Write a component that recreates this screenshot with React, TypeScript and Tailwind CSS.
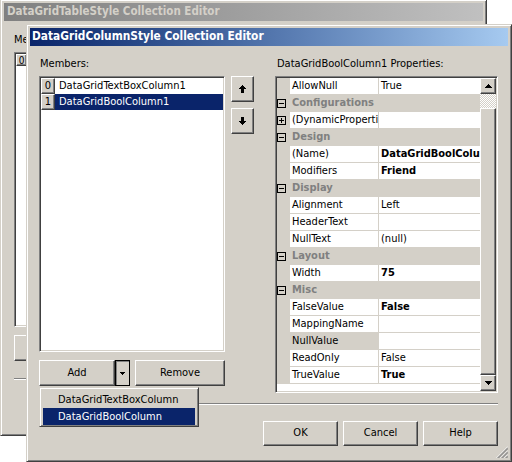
import React from "react";

const raised =
  "border border-t-white border-l-white border-r-[#404040] border-b-[#404040] shadow-[inset_-1px_-1px_0_#808080,inset_1px_1px_0_#d4d0c8]";
const sunken =
  "border border-t-[#808080] border-l-[#808080] border-r-white border-b-white shadow-[inset_1px_1px_0_#404040,inset_-1px_-1px_0_#d4d0c8]";
const frame =
  "border border-t-[#d4d0c8] border-l-[#d4d0c8] border-r-[#404040] border-b-[#404040] shadow-[inset_1px_1px_0_#ffffff,inset_-1px_-1px_0_#808080]";

type Prop = {
  cat?: string;
  name?: string;
  value?: string;
  bold?: boolean;
  plus?: boolean;
  grayName?: boolean;
};

const props: Prop[] = [
  { name: "AllowNull", value: "True" },
  { cat: "Configurations" },
  { name: "(DynamicProperties)", value: "", plus: true },
  { cat: "Design" },
  { name: "(Name)", value: "DataGridBoolColumn1", bold: true },
  { name: "Modifiers", value: "Friend", bold: true },
  { cat: "Display" },
  { name: "Alignment", value: "Left" },
  { name: "HeaderText", value: "" },
  { name: "NullText", value: "(null)" },
  { cat: "Layout" },
  { name: "Width", value: "75", bold: true },
  { cat: "Misc" },
  { name: "FalseValue", value: "False", bold: true },
  { name: "MappingName", value: "" },
  { name: "NullValue", value: "", grayName: true },
  { name: "ReadOnly", value: "False" },
  { name: "TrueValue", value: "True", bold: true },
];

function TinyArrow({ down = false }: { down?: boolean }) {
  // 7x4 scrollbar triangle
  return (
    <svg width="7" height="4" viewBox="0 0 7 4" shapeRendering="crispEdges" className={down ? "rotate-180" : ""}>
      <rect x="3" y="0" width="1" height="1" fill="#000" />
      <rect x="2" y="1" width="3" height="1" fill="#000" />
      <rect x="1" y="2" width="5" height="1" fill="#000" />
      <rect x="0" y="3" width="7" height="1" fill="#000" />
    </svg>
  );
}

function MoveArrow({ down = false }: { down?: boolean }) {
  return (
    <svg width="7" height="8" viewBox="0 0 7 8" shapeRendering="crispEdges" className={down ? "rotate-180" : ""}>
      <rect x="3" y="0" width="1" height="1" fill="#000" />
      <rect x="2" y="1" width="3" height="1" fill="#000" />
      <rect x="1" y="2" width="5" height="1" fill="#000" />
      <rect x="0" y="3" width="7" height="1" fill="#000" />
      <rect x="2" y="4" width="3" height="4" fill="#000" />
    </svg>
  );
}

function ExpandBox({ plus }: { plus?: boolean }) {
  return (
    <svg width="9" height="9" viewBox="0 0 9 9" shapeRendering="crispEdges">
      <rect x="0.5" y="0.5" width="8" height="8" fill="none" stroke="#000" />
      <rect x="2" y="4" width="5" height="1" fill="#000" />
      {plus && <rect x="4" y="2" width="1" height="5" fill="#000" />}
    </svg>
  );
}

function SizeGrip() {
  return (
    <svg width="12" height="12" viewBox="0 0 12 12">
      {[1, 5, 9].map((a) => (
        <g key={a}>
          <line x1={12} y1={a - 0.5} x2={a - 0.5} y2={12} stroke="#ffffff" />
          <line x1={12} y1={a + 0.5} x2={a + 0.5} y2={12} stroke="#808080" />
          <line x1={12} y1={a + 1.5} x2={a + 1.5} y2={12} stroke="#808080" />
        </g>
      ))}
    </svg>
  );
}

function Button({ label, className = "" }: { label: string; className?: string }) {
  return (
    <div className={`${raised} bg-[#d4d0c8] flex items-center justify-center text-black ${className}`}>
      {label}
    </div>
  );
}

function PropertyGrid() {
  return (
    <div className={`${sunken} mt-[6px] h-[317px] p-[1px] bg-white flex`}>
      <div className="w-[203px] flex flex-col overflow-hidden">
        {props.map((p, i) =>
          p.cat ? (
            <div key={i} className="h-[17px] shrink-0 bg-[#d4d0c8] flex">
              <div className="w-[13px] pt-[4px]">
                <ExpandBox />
              </div>
              <div className="pl-[2px] h-[16px] leading-[16px] font-bold text-[#808080]">{p.cat}</div>
            </div>
          ) : (
            <div key={i} className="h-[17px] shrink-0 bg-[#d4d0c8] flex">
              <div className="w-[13px] pt-[4px]">{p.plus && <ExpandBox plus />}</div>
              <div
                className={`w-[88px] h-[16px] leading-[16px] pl-[2px] overflow-hidden whitespace-nowrap ${
                  p.grayName ? "bg-[#d4d0c8]" : "bg-white"
                }`}
              >
                {p.name}
              </div>
              <div className="w-[1px]" />
              <div
                className={`w-[101px] h-[16px] leading-[16px] pl-[2px] bg-white overflow-hidden whitespace-nowrap ${
                  p.bold ? "font-bold" : ""
                }`}
              >
                {p.value}
              </div>
            </div>
          )
        )}
      </div>
      <div className="w-[16px] flex flex-col">
        <div className={`${raised} h-[16px] bg-[#d4d0c8] flex items-center justify-center`}>
          <TinyArrow />
        </div>
        <div className="h-[14px] bg-[repeating-conic-gradient(#d4d0c8_0_25%,#ffffff_0_50%)] bg-[length:2px_2px]" />
        <div className={`${raised} h-[267px] bg-[#d4d0c8]`} />
        <div className={`${raised} h-[16px] bg-[#d4d0c8] flex items-center justify-center`}>
          <TinyArrow down />
        </div>
      </div>
    </div>
  );
}

function BackWindow() {
  return (
    <div className={`${frame} absolute left-0 top-[-1px] w-[487px] h-[437px] bg-[#d4d0c8] p-[3px] flex flex-col`}>
      <div className="h-[18px] bg-linear-to-r from-[#808080] to-[#c0c0c0] text-[#d4d0c8] text-[11.5px] font-bold pl-[3px] flex items-center">
        DataGridTableStyle Collection Editor
      </div>
      <div className="flex flex-col pl-[10px] pt-[12px]">
        <div className="h-[13px] leading-[13px]">Members:</div>
        <div className={`${sunken} mt-[6px] w-[186px] h-[275px] bg-white p-[1px]`}>
          <div className="flex h-[12px]">
            <div className={`${raised} w-[11px] bg-[#d4d0c8] flex items-center justify-center text-[10px]`}>0</div>
          </div>
        </div>
        <Button label="Add" className="mt-[8px] w-[76px] h-[26px]" />
        <div className="mt-[17px] w-[460px] h-[2px] border-t border-t-[#808080] border-b border-b-white" />
      </div>
    </div>
  );
}

function FrontWindow() {
  return (
    <div className={`${frame} absolute left-[26px] top-[24px] w-[486px] h-[438px] bg-[#d4d0c8] p-[3px] flex flex-col`}>
      <div className="h-[18px] shrink-0 bg-linear-to-r from-[#0a246a] to-[#a6caf0] text-white text-[11.8px] font-bold pl-[2px] flex items-center">
        DataGridColumnStyle Collection Editor
      </div>
      <div className="relative flex-1 flex flex-col pl-[9px] pr-[10px] pt-[11px]">
        <div className="flex items-start">
          {/* members */}
          <div className="w-[186px] flex flex-col">
            <div className="h-[13px] leading-[13px] pl-[1px]">Members:</div>
            <div className={`${sunken} mt-[6px] h-[276px] bg-white p-[1px]`}>
              <div className="flex h-[16px]">
                <div className={`${raised} w-[14px] bg-[#d4d0c8] flex items-center justify-center`}>0</div>
                <div className="flex-1 pl-[4px] leading-[16px]">DataGridTextBoxColumn1</div>
              </div>
              <div className="flex h-[16px]">
                <div className={`${raised} w-[14px] bg-[#d4d0c8] flex items-center justify-center`}>1</div>
                <div className="flex-1 pl-[4px] leading-[16px] bg-[#0a246a] text-white">DataGridBoolColumn1</div>
              </div>
            </div>
            <div className="relative mt-[8px] flex h-[26px]">
              <Button label="Add" className="w-[76px] h-[26px]" />
              <div className="w-[15px] h-[26px] border border-black bg-[#d4d0c8] shadow-[inset_1px_1px_0_#808080] flex items-center justify-center">
                <svg width="5" height="3" viewBox="0 0 5 3" shapeRendering="crispEdges">
                  <rect x="0" y="0" width="5" height="1" fill="#000" />
                  <rect x="1" y="1" width="3" height="1" fill="#000" />
                  <rect x="2" y="2" width="1" height="1" fill="#000" />
                </svg>
              </div>
              <Button label="Remove" className="ml-[5px] w-[90px] h-[26px]" />

              <div className={`${frame} absolute left-0 top-[27px] z-10 w-[160px] h-[40px] bg-[#d4d0c8] p-[3px] flex flex-col`}>
                <div className="h-[17px] leading-[17px] pl-[15px]">DataGridTextBoxColumn</div>
                <div className="h-[17px] leading-[17px] pl-[15px] bg-[#0a246a] text-white">DataGridBoolColumn</div>
              </div>
            </div>
          </div>

          {/* move up / down */}
          <div className="ml-[6px] mt-[19px] flex flex-col gap-[6px]">
            <div className={`${raised} w-[23px] h-[26px] bg-[#d4d0c8] flex items-center justify-center`}>
              <MoveArrow />
            </div>
            <div className={`${raised} w-[23px] h-[26px] bg-[#d4d0c8] flex items-center justify-center`}>
              <MoveArrow down />
            </div>
          </div>

          {/* properties */}
          <div className="ml-[21px] w-[223px] flex flex-col">
            <div className="h-[13px] leading-[13px] pl-[2px] whitespace-nowrap">DataGridBoolColumn1 Properties:</div>
            <PropertyGrid />
          </div>
        </div>

        <div className="mt-[10px] h-[2px] border-t border-t-[#808080] border-b border-b-white" />

        <div className="mt-[16px] flex justify-end gap-[5px]">
          <Button label="OK" className="w-[75px] h-[25px]" />
          <Button label="Cancel" className="w-[75px] h-[25px]" />
          <Button label="Help" className="w-[75px] h-[25px]" />
        </div>

        <div className="absolute right-0 bottom-0">
          <SizeGrip />
        </div>
      </div>
    </div>
  );
}

export default function App() {
  return (
    <div className="relative w-[512px] h-[462px] overflow-hidden bg-white text-[11px] text-black font-[family-name:'DejaVu_Sans_Condensed','DejaVu_Sans',sans-serif]">
      <BackWindow />
      <FrontWindow />
    </div>
  );
}
